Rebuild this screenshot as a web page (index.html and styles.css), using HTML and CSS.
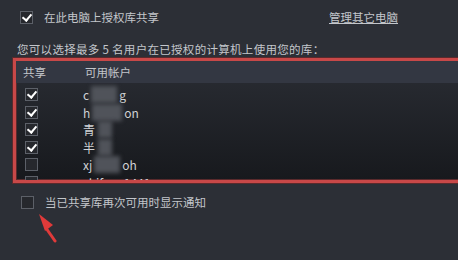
FILE: index.html
```html
<!DOCTYPE html>
<html lang="zh-CN">
<head>
	<meta charset="UTF-8">
	<title>家庭共享</title>
	<link rel="stylesheet" href="styles.css">
</head>
<body>
	<div class="panel">
		<div class="top">
			<label class="opt">
				<span class="cb on"></span>
				<span>在此电脑上授权库共享</span>
			</label>
			<a class="manage">管理其它电脑</a>
		</div>
		<p class="hint">您可以选择最多 5 名用户在已授权的计算机上使用您的库：</p>
		<div class="users">
			<div class="head">
				<span class="col-share">共享</span>
				<span class="col-name">可用帐户</span>
			</div>
			<div class="list">
				<div class="row"><span class="cb on"></span><span class="name">c<i class="blur w1"></i>g</span></div>
				<div class="row"><span class="cb on"></span><span class="name">h<i class="blur w2"></i>on</span></div>
				<div class="row"><span class="cb on"></span><span class="name">青<i class="blur w3"></i></span></div>
				<div class="row"><span class="cb on"></span><span class="name">半<i class="blur w3"></i></span></div>
				<div class="row"><span class="cb"></span><span class="name">xj<i class="blur w4"></i>oh</span></div>
				<div class="row"><span class="cb"></span><span class="name">zhifeng1441</span></div>
			</div>
		</div>
		<label class="opt notify">
			<span class="cb"></span>
			<span>当已共享库再次可用时显示通知</span>
		</label>
		<svg class="arrow" width="40" height="50" viewBox="0 0 40 50">
			<path d="M27 38 L18 25" stroke="#e03a3a" stroke-width="3" stroke-linecap="round"/>
			<path d="M11 11 L25 22 L17 28 Z" fill="#e03a3a"/>
		</svg>
	</div>
</body>
</html>
```

FILE: styles.css
```css
html, body{
	margin: 0;
	padding: 0;
}
body{
	width: 458px;
	height: 260px;
	overflow: hidden;
	background: #2c2f36;
	color: #c3c6cb;
	font-family: "Noto Sans CJK SC", "Liberation Sans", sans-serif;
	font-size: 11.5px;
}
.panel{
	position: relative;
	height: 260px;
}
.top{
	display: flex;
	align-items: center;
	height: 14px;
	padding: 10px 0 0 20px;
}
.opt{
	display: flex;
	align-items: center;
	gap: 11px;
}
.manage{
	margin-left: 170px;
	color: #c3c6cb;
	text-decoration: underline;
}
.hint{
	margin: 0;
	padding: 17px 0 0 17px;
	line-height: 16px;
	letter-spacing: 0.3px;
}
.cb{
	display: inline-block;
	box-sizing: border-box;
	width: 13px;
	height: 13px;
	border: 1px solid #5c6068;
	background: #26282d;
	position: relative;
}
.cb.on::after{
	content: "";
	position: absolute;
	left: 3px;
	top: 0px;
	width: 4px;
	height: 7px;
	border: solid #fff;
	border-width: 0 2.5px 2.5px 0;
	transform: rotate(40deg);
}
.users{
	margin: 1px -20px 0 13px;
	height: 119px;
	border: 3px solid #c84848;
	border-right: none;
	box-shadow: 0 0 0 1px #5a2a2c, inset 0 0 0 1px #5a2a2c;
	background: linear-gradient(#2a2d34, #17191d);
	overflow: hidden;
}
.head{
	display: flex;
	align-items: center;
	height: 22px;
	background: #333742;
}
.col-share{
	width: 69px;
	padding-left: 7px;
	box-sizing: border-box;
}
.list{
	padding-top: 3px;
}
.row{
	display: flex;
	align-items: center;
	height: 17.5px;
	padding-left: 9px;
}
.name{
	margin-left: 45px;
	color: #d0d2d6;
	font-size: 12px;
	display: flex;
	align-items: center;
}
.blur{
	display: inline-block;
	height: 17px;
	background: #50535a;
	filter: blur(2px);
}
.w1{ width: 26px; margin: 0 2px; }
.w2{ width: 30px; margin: 0 2px; }
.w3{ width: 14px; margin-left: 3px; }
.w4{ width: 26px; margin: 0 2px; }
.notify{
	padding: 11px 0 0 21px;
}
.arrow{
	position: absolute;
	left: 28px;
	top: 203px;
}
```
